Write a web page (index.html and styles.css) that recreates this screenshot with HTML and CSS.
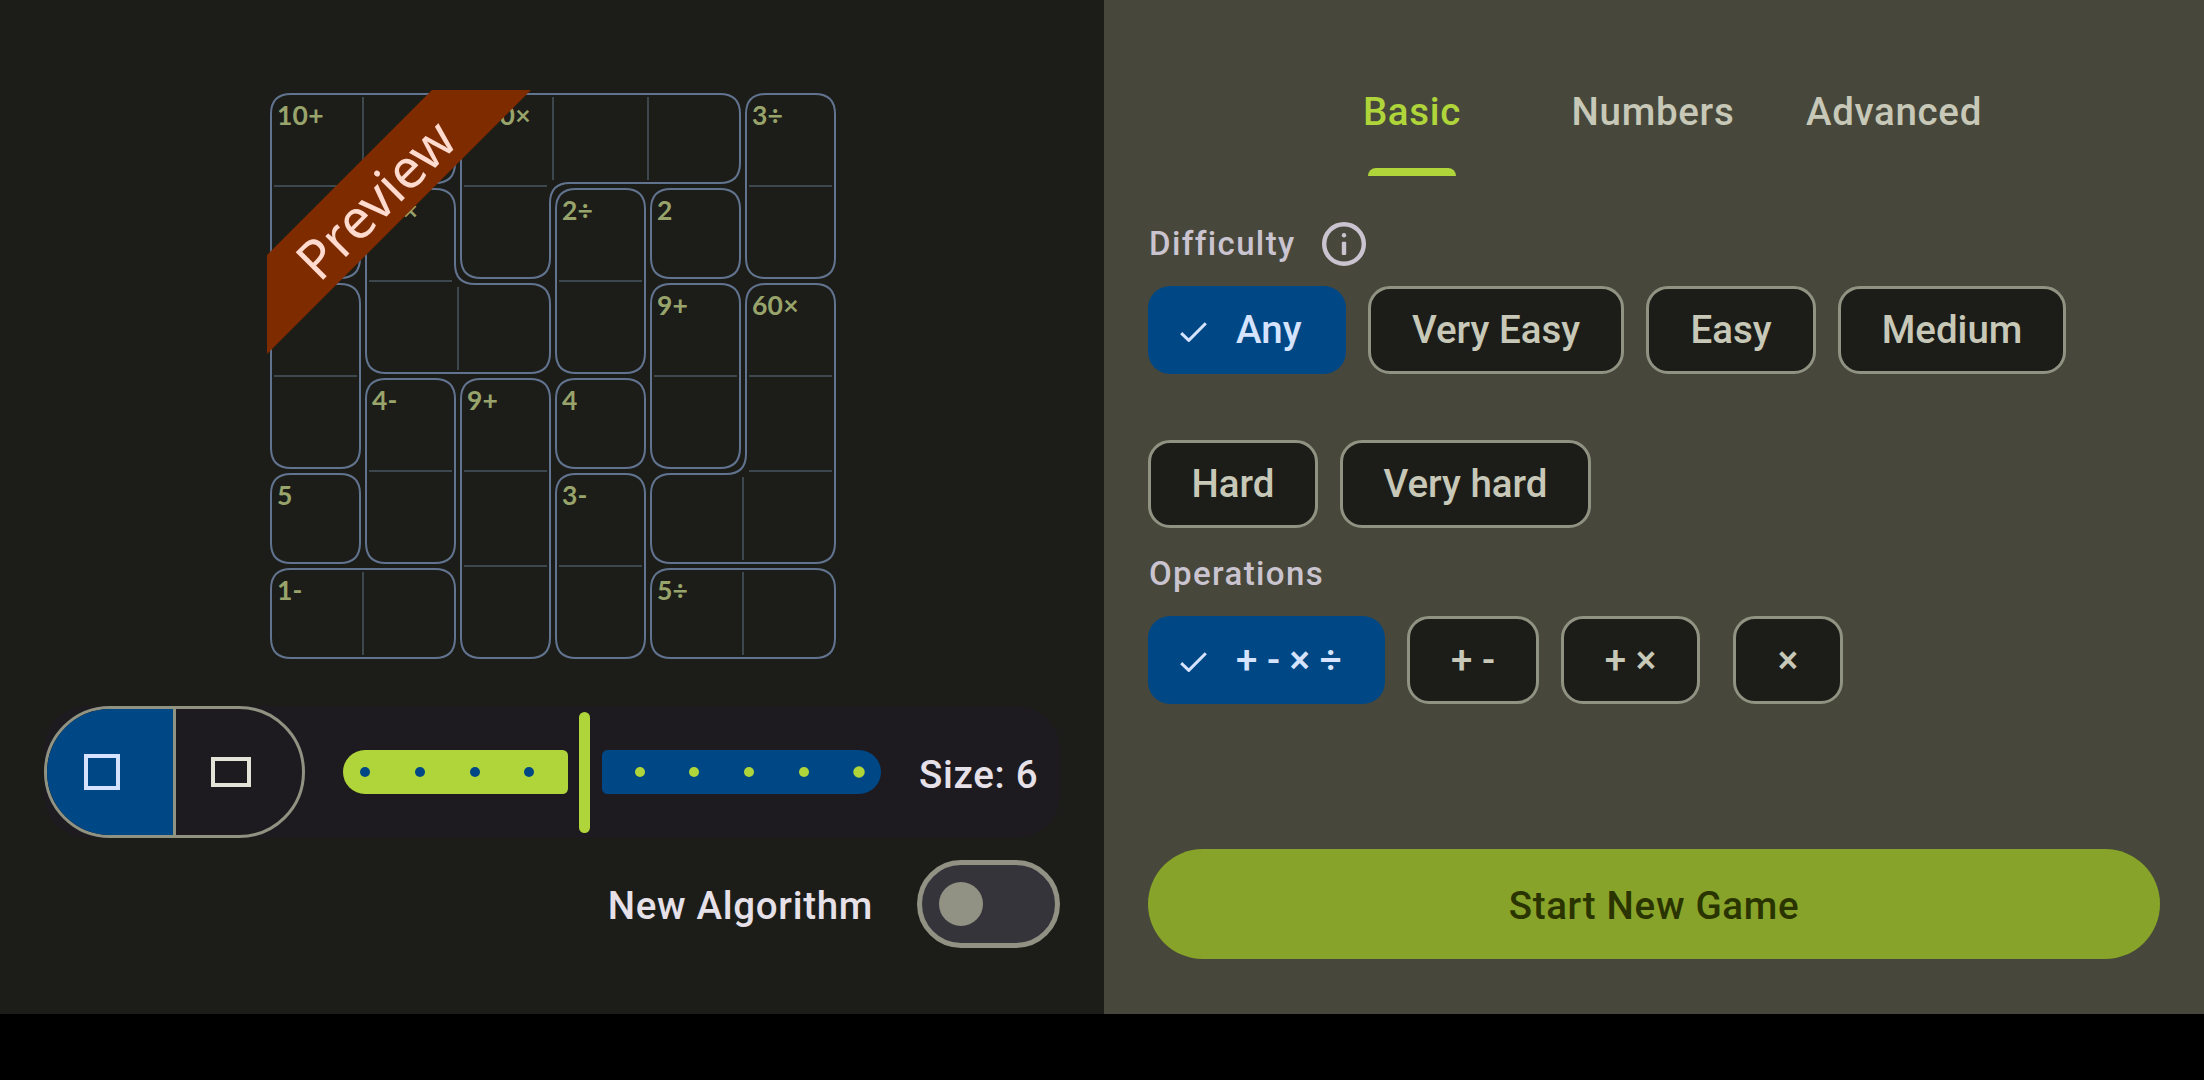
FILE: index.html
```html
<!DOCTYPE html>
<html lang="en">
<head>
<meta charset="utf-8">
<title>New Game</title>
<link rel="stylesheet" href="styles.css">
</head>
<body>
<main class="screen">
  <section class="preview-pane">
    <svg class="board" viewBox="0 0 590 590" width="590" height="590" role="img" aria-label="Preview">
      <g transform="translate(-260 -80)">
        <g class="cell-lines">
          <path d="M363 97V180M553 97V180M648 97V180M458 287V370M743 477V560M363 572V655M743 572V655"/>
          <path d="M274 186H357M464 186H547M749 186H832M369 281H452M559 281H642M274 376H357M654 376H737M749 376H832M369 471H452M464 471H547M749 471H832M464 566H547M559 566H642"/>
        </g>
        <g class="cages">
          <path d="M291 94H435Q455 94 455 114V163Q455 183 435 183H380Q360 183 360 203V258Q360 278 340 278H291Q271 278 271 258V114Q271 94 291 94Z"/>
          <path d="M481 94H720Q740 94 740 114V163Q740 183 720 183H570Q550 183 550 203V258Q550 278 530 278H481Q461 278 461 258V114Q461 94 481 94Z"/>
          <path d="M386 189H435Q455 189 455 209V264Q455 284 475 284H530Q550 284 550 304V353Q550 373 530 373H386Q366 373 366 353V209Q366 189 386 189Z"/>
          <path d="M766 284H815Q835 284 835 304V543Q835 563 815 563H671Q651 563 651 543V494Q651 474 671 474H726Q746 474 746 454V304Q746 284 766 284Z"/>
          <path d="M766 94H815Q835 94 835 114V258Q835 278 815 278H766Q746 278 746 258V114Q746 94 766 94Z"/>
          <path d="M576 189H625Q645 189 645 209V353Q645 373 625 373H576Q556 373 556 353V209Q556 189 576 189Z"/>
          <path d="M671 189H720Q740 189 740 209V258Q740 278 720 278H671Q651 278 651 258V209Q651 189 671 189Z"/>
          <path d="M291 284H340Q360 284 360 304V448Q360 468 340 468H291Q271 468 271 448V304Q271 284 291 284Z"/>
          <path d="M671 284H720Q740 284 740 304V448Q740 468 720 468H671Q651 468 651 448V304Q651 284 671 284Z"/>
          <path d="M386 379H435Q455 379 455 399V543Q455 563 435 563H386Q366 563 366 543V399Q366 379 386 379Z"/>
          <path d="M481 379H530Q550 379 550 399V638Q550 658 530 658H481Q461 658 461 638V399Q461 379 481 379Z"/>
          <path d="M576 379H625Q645 379 645 399V448Q645 468 625 468H576Q556 468 556 448V399Q556 379 576 379Z"/>
          <path d="M291 474H340Q360 474 360 494V543Q360 563 340 563H291Q271 563 271 543V494Q271 474 291 474Z"/>
          <path d="M576 474H625Q645 474 645 494V638Q645 658 625 658H576Q556 658 556 638V494Q556 474 576 474Z"/>
          <path d="M291 569H435Q455 569 455 589V638Q455 658 435 658H291Q271 658 271 638V589Q271 569 291 569Z"/>
          <path d="M671 569H815Q835 569 835 589V638Q835 658 815 658H671Q651 658 651 638V589Q651 569 671 569Z"/>
        </g>
        <g class="clues">
          <text x="277" y="124.5">10+</text>
          <text x="484" y="124.5">30×</text>
          <text x="752" y="124.5">3÷</text>
          <text x="387" y="219.5">8×</text>
          <text x="562" y="219.5">2÷</text>
          <text x="657" y="219.5">2</text>
          <text x="657" y="314.5">9+</text>
          <text x="752" y="314.5">60×</text>
          <text x="372" y="409.5">4-</text>
          <text x="467" y="409.5">9+</text>
          <text x="562" y="409.5">4</text>
          <text x="277" y="504.5">5</text>
          <text x="562" y="504.5">3-</text>
          <text x="277" y="599.5">1-</text>
          <text x="657" y="599.5">5÷</text>
        </g>
        <path class="ribbon" d="M432 90H531L267 354V255Z"/>
        <text class="ribbon-text" transform="translate(319.500 283.500) rotate(-45)">Preview</text>
      </g>
    </svg>

    <div class="size-bar">
      <div class="shape-toggle">
        <div class="shape selected"><span class="square"></span></div>
        <div class="shape"><span class="rectangle"></span></div>
      </div>
      <div class="slider">
        <div class="track done"><i></i><i></i><i></i><i></i></div>
        <div class="thumb"></div>
        <div class="track rest"><i></i><i></i><i></i><i></i><i></i></div>
      </div>
      <span class="size-label">Size: 6</span>
    </div>

    <div class="algorithm">
      <span class="algorithm-label">New Algorithm</span>
      <div class="switch"><span class="switch-thumb"></span></div>
    </div>
  </section>

  <section class="options-pane">
    <nav class="tabs">
      <div class="tab active">Basic</div>
      <div class="tab">Numbers</div>
      <div class="tab">Advanced</div>
    </nav>

    <div class="heading difficulty">
      <span>Difficulty</span>
      <svg class="info" viewBox="2 2 20 20" width="44" height="44">
        <circle cx="12" cy="12" r="9" fill="none" stroke="currentColor" stroke-width="2"/>
        <circle cx="12" cy="8" r="1" fill="currentColor"/>
        <rect x="11" y="11" width="2" height="6" rx=".5" fill="currentColor"/>
      </svg>
    </div>
    <div class="chips levels">
      <div class="chip checked any">
        <svg class="check" viewBox="0 0 27 20" width="27" height="20"><path d="M1.200 11.200L8.800 18.400L25.800 1.200"/></svg>
        <span>Any</span>
      </div>
      <div class="chip very-easy">Very Easy</div>
      <div class="chip easy">Easy</div>
      <div class="chip medium">Medium</div>
      <div class="chip hard">Hard</div>
      <div class="chip very-hard">Very hard</div>
    </div>

    <div class="heading">Operations</div>
    <div class="chips">
      <div class="chip checked op-all">
        <svg class="check" viewBox="0 0 27 20" width="27" height="20"><path d="M1.200 11.200L8.800 18.400L25.800 1.200"/></svg>
        <span>+ - × ÷</span>
      </div>
      <div class="chip op-add-sub">+ -</div>
      <div class="chip op-add-mul">+ ×</div>
      <div class="chip op-mul">×</div>
    </div>

    <div class="start">Start New Game</div>
  </section>
</main>
</body>
</html>
```
FILE: styles.css
```css
* {
  box-sizing: border-box;
}

body {
  margin: 0;
  height: 1080px;
  background: #000;
  font-family: Roboto, "Liberation Sans", sans-serif;
  font-size: 38.5px;
  font-weight: 500;
  line-height: 55px;
  letter-spacing: 0.69px;
  white-space: nowrap;
}

.screen {
  display: flex;
  width: 2204px;
  height: 1014px;
}

/* Left pane */
.preview-pane {
  width: 1104px;
  padding: 80px 44px 0;
  background: #1c1d18;
}

.board {
  display: block;
  margin-left: 216px;
}

.cell-lines,
.cages {
  fill: none;
  stroke-width: 2;
}

.cell-lines {
  stroke: #3c474e;
}

.cages {
  stroke: #61738e;
}

.clues {
  font-family: Lato, sans-serif;
  font-size: 26.5px;
  font-weight: 700;
  letter-spacing: 0.2px;
  fill: #98a46b;
}

.ribbon {
  fill: #7f2b00;
}

.ribbon-text {
  font-family: "Noto Sans", sans-serif;
  font-size: 54.4px;
  font-weight: 400;
  letter-spacing: 0;
  fill: #ffdbcf;
}

.size-bar {
  display: flex;
  align-items: center;
  width: 1016px;
  height: 132px;
  margin-top: 36px;
  border-radius: 44px;
  background: #1e1b20;
}

.shape-toggle {
  display: flex;
  width: 261px;
  height: 132px;
  border: 3px solid #909282;
  border-radius: 66px;
  overflow: hidden;
}

.shape {
  display: flex;
  align-items: center;
  flex: 1;
  padding-left: 35px;
}

.shape.selected {
  flex: 0 0 129px;
  padding-left: 37px;
  border-right: 3px solid #909282;
  background: #004885;
}

.square {
  width: 36px;
  height: 36px;
  border: 4px solid #d5e3ff;
}

.rectangle {
  width: 40px;
  height: 30px;
  border: 4px solid #e4e3d8;
}

.slider {
  display: flex;
  align-items: center;
  width: 538px;
  margin-left: 38px;
}

.track {
  display: flex;
  align-items: center;
  justify-content: space-between;
  height: 44px;
}

.track i {
  width: 10px;
  height: 10px;
  border-radius: 50%;
}

.done {
  width: 224.5px;
  padding: 0 33px 0 17px;
  border-radius: 22px 5.5px 5.5px 22px;
  background: #afd53a;
}

.done i {
  background: #004885;
}

.thumb {
  width: 11px;
  height: 121px;
  margin: 0 12.500px 0 11px;
  border-radius: 6px;
  background: #afd53a;
}

.rest {
  width: 279px;
  padding: 0 17px 0 32.500px;
  border-radius: 5.5px 22px 22px 5.5px;
  background: #004885;
}

.rest i {
  background: #afd53a;
}

.rest i:last-child {
  transform: scale(1.15);
}

.size-label {
  margin-left: 38px;
  padding-top: 5px;
  color: #e6e0e9;
}

.algorithm {
  display: flex;
  align-items: center;
  justify-content: flex-end;
  height: 88px;
  margin-top: 22px;
  color: #e6e0e9;
}

.algorithm-label {
  padding-top: 3px;
}

.switch {
  display: flex;
  align-items: center;
  width: 143px;
  height: 88px;
  margin-left: 44px;
  padding-left: 16.5px;
  border: 5.5px solid #919283;
  border-radius: 44px;
  background: #36343b;
}

.switch-thumb {
  width: 44px;
  height: 44px;
  border-radius: 50%;
  background: #919283;
}

/* Right pane */
.options-pane {
  flex: 1;
  padding: 44px 44px 0;
  background: #47483b;
}

.tabs {
  display: flex;
  width: 723px;
  height: 132px;
  margin-left: 143.500px;
}

.tab {
  display: flex;
  flex: 1;
  flex-direction: column;
  align-items: center;
  justify-content: space-between;
  padding-top: 40px;
  color: #c7c8b7;
}

.tab.active {
  color: #afd53a;
}

.tab.active::after {
  content: "";
  width: 88px;
  height: 8px;
  border-radius: 8px 8px 0 0;
  background: #afd53a;
}

.heading {
  display: flex;
  align-items: center;
  gap: 26px;
  height: 44px;
  padding: 2px 0 0 1px;
  font-size: 33px;
  line-height: 44px;
  letter-spacing: 1.375px;
  color: #cac4d0;
}

.heading.difficulty {
  height: 66px;
  margin-top: 34px;
}

.info {
  display: block;
}

.chips {
  display: flex;
  flex-wrap: wrap;
  gap: 66px 22px;
  margin-top: 21px;
}

.levels {
  margin: 10px 0 23px;
}

.chip {
  display: flex;
  align-items: center;
  justify-content: center;
  height: 88px;
  padding-bottom: 2px;
  border: 3px solid #909282;
  border-radius: 22px;
  background: #1c1d18;
  color: #c7c8b7;
  letter-spacing: 0;
}

.chip.checked {
  justify-content: flex-start;
  padding-left: 32px;
  gap: 29px;
  border: 0;
  background: #004885;
  color: #d5e3ff;
}

.check {
  margin-top: 5px;
}

.check path {
  fill: none;
  stroke: #d5e3ff;
  stroke-width: 3;
}

.any {
  width: 198px;
}

.very-easy {
  width: 256px;
}

.easy {
  width: 170px;
}

.medium {
  width: 228px;
}

.hard {
  width: 170px;
}

.very-hard {
  width: 251px;
}

.op-all {
  width: 237px;
}

.op-add-sub {
  width: 132px;
}

.op-add-mul {
  width: 139px;
}

.op-mul {
  width: 110px;
  margin-left: 11px;
}

.start {
  height: 110px;
  margin-top: 145px;
  padding-top: 29px;
  border-radius: 55px;
  background: #88a329;
  color: #2a3400;
  text-align: center;
}
```
